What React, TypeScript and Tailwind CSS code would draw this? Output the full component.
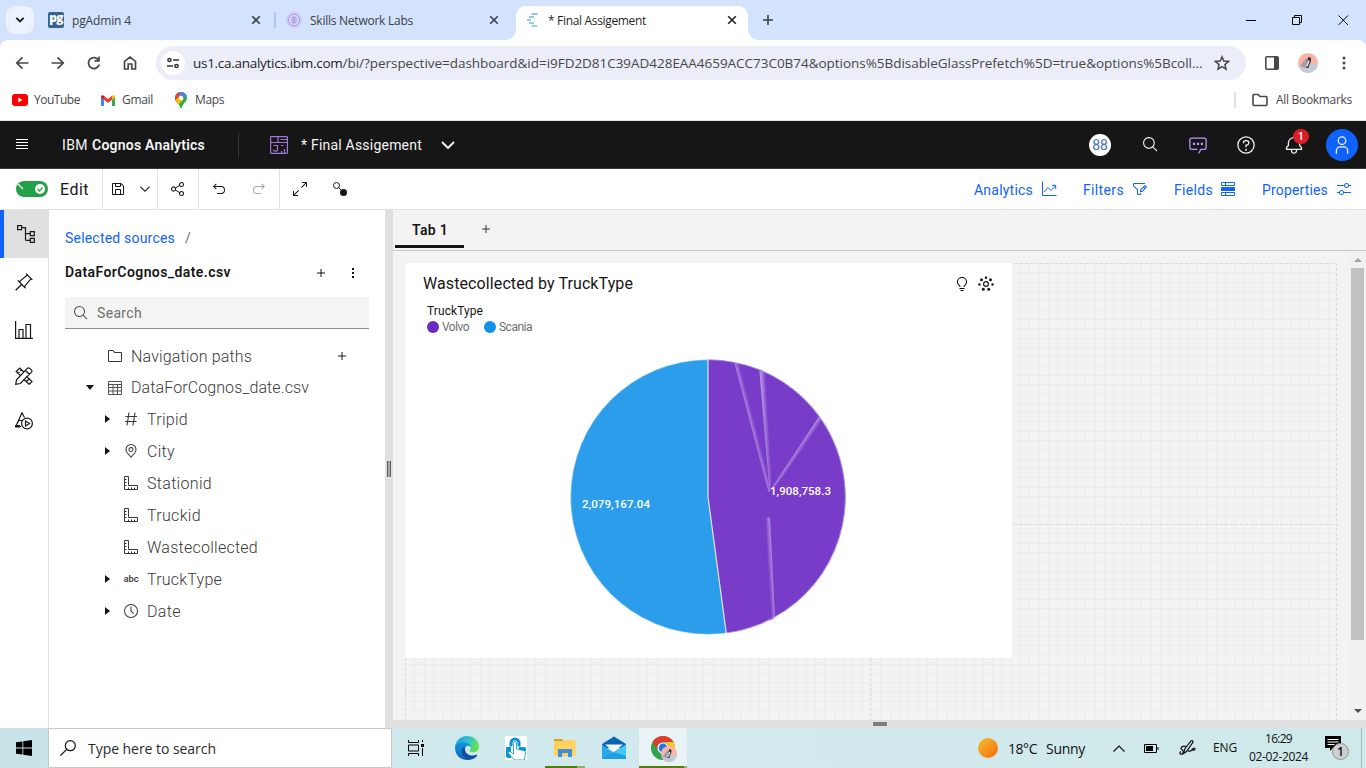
import { useLayoutEffect, useRef, useState, type ReactNode } from 'react';

/* Single-line label whose tracking adapts so the text fills the given width. */
function Label({ text, className = '' }: { text: string; className?: string }) {
  const outer = useRef<HTMLSpanElement>(null);
  const inner = useRef<HTMLSpanElement>(null);
  const [tracking, setTracking] = useState(0);
  useLayoutEffect(() => {
    if (!outer.current || !inner.current) return;
    const room = outer.current.getBoundingClientRect().width;
    const natural = inner.current.getBoundingClientRect().width;
    setTracking((room - natural) / text.length);
  }, [text]);
  return (
    <span ref={outer} className={`block shrink-0 whitespace-pre ${className}`}>
      <span ref={inner} style={{ letterSpacing: tracking }}>{text}</span>
    </span>
  );
}

function Icon({ d, className = '', children }: { d?: string; className?: string; children?: ReactNode }) {
  return (
    <svg viewBox="0 0 32 32" width="16" height="16" fill="currentColor" className={`shrink-0 ${className}`}>
      {d && <path d={d} />}
      {children}
    </svg>
  );
}

const P = {
  add: 'M17 15V8h-2v7H8v2h7v7h2v-7h7v-2z',
  chevron: 'M16 22 6 12l1.4-1.4 8.6 8.6 8.6-8.6L26 12z',
  share:
    'M23,20a5,5,0,0,0-3.89,1.89L11.8,17.32a4.46,4.46,0,0,0,0-2.64l7.31-4.57A5,5,0,1,0,18,7a4.79,4.79,0,0,0,.2,1.32l-7.31,4.57a5,5,0,1,0,0,6.22l7.31,4.57A4.79,4.79,0,0,0,18,25a5,5,0,1,0,5-5ZM23,4a3,3,0,1,1-3,3A3,3,0,0,1,23,4ZM7,19a3,3,0,1,1,3-3A3,3,0,0,1,7,19Zm16,9a3,3,0,1,1,3-3A3,3,0,0,1,23,28Z',
  save: 'M27.71,9.29l-5-5A1,1,0,0,0,22,4H6A2,2,0,0,0,4,6V26a2,2,0,0,0,2,2H26a2,2,0,0,0,2-2V10A1,1,0,0,0,27.71,9.29ZM12,6h8v4H12Zm8,20H12V18h8Zm2,0V18a2,2,0,0,0-2-2H12a2,2,0,0,0-2,2v8H6V6h4v4a2,2,0,0,0,2,2h8a2,2,0,0,0,2-2V6.41l4,4V26Z',
  undo: 'M20,10H7.8149l3.5874-3.5859L10,5,4,11,10,17l1.4023-1.4146L7.8179,12H20a6,6,0,0,1,0,12H12v2h8a8,8,0,0,0,0-16Z',
  expand:
    'M20 2v2h6.586L18 12.582 19.414 14 28 5.414V12h2V2zM14 19.416 12.592 18 4 26.586V20H2v10h10v-2H5.414z',
  search:
    'M29,27.5859l-7.5521-7.5521a11.0177,11.0177,0,1,0-1.4141,1.4141L27.5859,29ZM4,13a9,9,0,1,1,9,9A9.01,9.01,0,0,1,4,13Z',
  help: 'M16,2A14,14,0,1,0,30,16,14,14,0,0,0,16,2Zm0,26A12,12,0,1,1,28,16,12,12,0,0,1,16,28ZM17,8H15.5A4.49,4.49,0,0,0,11,12.5V13h2v-.5A2.5,2.5,0,0,1,15.5,10H17a2.5,2.5,0,0,1,0,5H15v4.5h2V17a4.5,4.5,0,0,0,0-9Z',
  bell: 'M28.7071,19.293,26,16.5859V13a10.0136,10.0136,0,0,0-9-9.9492V1H15V3.0508A10.0136,10.0136,0,0,0,6,13v3.5859L3.2929,19.293A1,1,0,0,0,3,20v3a1,1,0,0,0,1,1h7v.7768a5.152,5.152,0,0,0,4.5,5.1987A5.0057,5.0057,0,0,0,21,25V24h7a1,1,0,0,0,1-1V20A1,1,0,0,0,28.7071,19.293ZM19,25a3,3,0,0,1-6,0V24h6Zm8-3H5V20.4141L7.707,17.707A1,1,0,0,0,8,17V13a8,8,0,0,1,16,0v4a1,1,0,0,0,.293.707L27,20.4141Z',
  user: 'M16 4a5 5 0 1 1-5 5 5 5 0 0 1 5-5m0-2a7 7 0 1 0 7 7A7 7 0 0 0 16 2zM26 30H24V25a5 5 0 0 0-5-5H13a5 5 0 0 0-5 5v5H6V25a7 7 0 0 1 7-7h6a7 7 0 0 1 7 7z',
  chat: 'M17.74,30,16,29l4-7h6a2,2,0,0,0,2-2V8a2,2,0,0,0-2-2H6A2,2,0,0,0,4,8V20a2,2,0,0,0,2,2h9v2H6a4,4,0,0,1-4-4V8A4,4,0,0,1,6,4H26a4,4,0,0,1,4,4V20a4,4,0,0,1-4,4H21.16ZM8 12.500h3.500v3.500H8zM14.300 12.500h3.500v3.500h-3.500zM20.500 12.500H24v3.500h-3.500z',
  filter:
    'M26,6H4V9.1708l7.4142,7.4143L12,17.171V26h4V24h2v2a2,2,0,0,1-2,2H12a2,2,0,0,1-2-2V18L2.5858,10.5853A2,2,0,0,1,2,9.1711V6A2,2,0,0,1,4,4H26ZM29.71,11.29l-3-3a1,1,0,0,0-1.42,0L16,17.59V22h4.41l9.3-9.29A1,1,0,0,0,29.71,11.29ZM19.59,20H18V18.41l5-5L24.59,15ZM26,13.59,24.41,12,26,10.41,27.59,12Z',
  adjust:
    'M30 8h-4.1c-.5-2.3-2.5-4-4.9-4s-4.4 1.7-4.9 4H2v2h14.1c.5 2.3 2.5 4 4.9 4s4.4-1.7 4.9-4H30V8zM21 12c-1.7 0-3-1.3-3-3s1.3-3 3-3 3 1.3 3 3S22.7 12 21 12zM2 24h4.100c.5 2.300 2.500 4 4.900 4s4.400-1.700 4.900-4H30v-2H15.900c-.5-2.300-2.500-4-4.900-4s-4.400 1.700-4.900 4H2V24zM11 20c1.700 0 3 1.300 3 3s-1.300 3-3 3-3-1.300-3-3S9.300 20 11 20z',
  pin: 'M28.59,13.31,30,11.9,20,2,18.69,3.42,19.87,4.6,8.38,14.32,6.66,12.61,5.25,14l5.66,5.68L2,28.58,3.41,30l8.91-8.91L18,26.75l1.39-1.42-1.71-1.71L27.4,12.13ZM16.26,22.2,9.8,15.74,21.29,6,26,10.71Z',
  folder:
    'M11.17,6l3.42,3.41.58.59H28V26H4V6h7.17m0-2H4A2,2,0,0,0,2,6V26a2,2,0,0,0,2,2H28a2,2,0,0,0,2-2V10a2,2,0,0,0-2-2H16L12.59,4.59A2,2,0,0,0,11.17,4Z',
  location:
    'M16,18a5,5,0,1,1,5-5A5.0057,5.0057,0,0,1,16,18Zm0-8a3,3,0,1,0,3,3A3.0033,3.0033,0,0,0,16,10ZM16,30,7.5645,20.0513c-.0479-.0571-.3482-.4515-.3482-.4515A10.8888,10.8888,0,0,1,5,13a11,11,0,0,1,22,0,10.8844,10.8844,0,0,1-2.2148,6.5973l-.0015.0025s-.3.3944-.3447.4474ZM8.8125,18.395c.001.0007.2334.3082.2866.3744L16,26.9079l6.91-8.15c.0439-.0552.2783-.3649.2788-.3657A8.901,8.901,0,0,0,25,13,9,9,0,1,0,7,13,8.9054,8.9054,0,0,0,8.8125,18.395Z',
  clock:
    'M16,30A14,14,0,1,1,30,16,14,14,0,0,1,16,30ZM16,4A12,12,0,1,0,28,16,12,12,0,0,0,16,4ZM20.59 22 15 16.41V7h2v8.58l5 5.010z',
  bulb: 'M11 24H21V26H11zM13 28H19V30H13zM16 2A10 10 0 0 0 6 12a9.190 9.190 0 0 0 3.460 7.620c1 .93 1.540 1.460 1.540 2.380h2c0-1.840-1.110-2.870-2.190-3.860A7.200 7.200 0 0 1 8 12a8 8 0 0 1 16 0 7.200 7.200 0 0 1-2.820 6.140c-1.070 1-2.180 2-2.180 3.860h2c0-.92.53-1.450 1.540-2.390A9.180 9.180 0 0 0 26 12 10 10 0 0 0 16 2z',
};

const Close = ({ className = '' }: { className?: string }) => (
  <svg viewBox="0 0 10 10" className={`size-[10px] shrink-0 ${className}`} stroke="currentColor" strokeWidth="1.6" fill="none">
    <path d="M1.200 1.200l7.600 7.600M8.800 1.200L1.200 8.800" />
  </svg>
);

function Avatar({ className = '' }: { className?: string }) {
  return (
    <svg viewBox="0 0 20 20" className={`shrink-0 ${className}`}>
      <clipPath id="face"><circle cx="10" cy="10" r="10" /></clipPath>
      <g clipPath="url(#face)">
        <rect width="20" height="20" fill="#fbb3a6" />
        <path d="M0 15l6-5 14 1v9H0z" fill="#c3cad8" />
        <path d="M2 13l6-8 2 3-3 7z" fill="#a4a0a6" />
        <path d="M10 4.500c2-1 3.500 0 3 3-.4 3-2 4-2.500 7.500L8 15c1-3 2.500-5 1.500-8z" fill="#2d2c30" />
        <path d="M10.500 7l1.200 1-2 5.500-1 0z" fill="#f7f3f0" />
      </g>
    </svg>
  );
}

function TabStrip() {
  return (
    <div className="flex h-10 items-center bg-[#d3e3fd] text-[12px] text-[#3c4043]">
      <div className="ml-1.5 flex size-7 items-center justify-center rounded-[9px] bg-[#ecf2fe] text-[#1f1f1f]">
        <svg viewBox="0 0 10 6" className="h-[6px] w-[10px]" fill="none" stroke="currentColor" strokeWidth="1.9"><path d="M1.300 .8 5 4.500 8.700 .8" /></svg>
      </div>
      <div className="ml-[14px] flex size-4 items-center justify-center rounded-[2px] bg-[#326690]">
        <span className="-mt-[4px] text-[12px] leading-3 font-extrabold tracking-[-0.8px] text-white">pg</span>
      </div>
      <Label text="pgAdmin 4" className="ml-2 w-[59px] pt-[2px]" />
      <Close className="ml-[120px]" />
      <div className="ml-[13px] h-4 w-[2px] bg-[#a8c7fa]" />
      <svg viewBox="0 0 16 16" className="ml-[10px] size-4" fill="none" stroke="#a99bea" strokeWidth="1">
        <circle cx="8" cy="8" r="7.300" fill="#d9d4fa" stroke="#c9bff7" />
        <circle cx="8" cy="8" r="5.800" />
        <path d="M8 5v7M5.500 6.500 8 4.500l2.500 2M4.500 9 8 7l3.500 2M5.500 11 8 9.500l2.500 1.500" stroke="#9a93c9" strokeWidth=".9" />
      </svg>
      <Label text="Skills Network Labs" className="ml-[8px] w-[103px] pt-[2px]" />
      <Close className="ml-[76px]" />
      <div className="flex h-full flex-col justify-end">
        <div className="ml-[7px] size-[10px] bg-[radial-gradient(circle_at_0_0,#d3e3fd_9.500px,#ffffff_10px)]" />
      </div>
      <div className="mt-1.5 flex h-[34px] w-[232px] items-center rounded-t-[10px] bg-white text-[#1f1f1f]">
        <svg viewBox="0 0 12 14" className="-mt-1.5 ml-[11px] h-[14px] w-3" strokeWidth="1.800" fill="none">
          <path d="M4.500 1h6" stroke="#8bb9f3" /><path d="M2 4h5" stroke="#7cc3f5" /><path d="M0 7h4" stroke="#7cc3f5" />
          <path d="M2 10h5" stroke="#80d1e6" /><path d="M4.500 13h6" stroke="#8ed4e6" />
        </svg>
        <Label text="* Final Assigement" className="-mt-1.5 ml-[9px] w-[98px] pt-[2px]" />
        <Close className="-mt-1.5 ml-[81px]" />
      </div>
      <div className="flex h-full flex-col justify-end">
        <div className="size-[10px] bg-[radial-gradient(circle_at_100%_0,#d3e3fd_9.500px,#ffffff_10px)]" />
      </div>
      <svg viewBox="0 0 10 10" className="ml-[5px] size-[10px]" stroke="#3c4043" strokeWidth="1.600"><path d="M5 0v10M0 5h10" /></svg>
      <svg viewBox="0 0 110 12" className="ml-[473px] h-3 w-[110px]" fill="none" stroke="#000">
        <path d="M0 6.500h10M46.500 3.500h7v7h-7zM48.500 3.500v-2h7v7h-2M92.500 1.500l9.500 9.500M102 1.500l-9.500 9.500" />
      </svg>
    </div>
  );
}

function AddressBar() {
  return (
    <div className="bg-[#d3e3fd]">
      <div className="flex h-[46px] items-center rounded-t-[8px] bg-white text-[#45474a]">
        <svg viewBox="0 0 124 16" className="ml-[15px] h-4 w-[124px]" fill="none" stroke="currentColor" strokeWidth="1.700">
          <path d="M13.500 8H2M7.500 2.300 1.800 8l5.700 5.700M36.500 8H48M42.500 2.300 48.200 8l-5.700 5.700" />
          <path d="M83.700 5.200A5.500 5.500 0 1 0 84.300 9.500M84 1.500v4.300h-4.500" />
          <path d="M109.500 6.300 115 2l5.500 4.300V14h-3.700V9h-3.600v5h-3.700z" />
        </svg>
        <div className="ml-[17px] flex h-[34px] w-[1090px] items-center rounded-full bg-[#ebeef8]">
          <div className="ml-[5px] flex size-6 items-center justify-center rounded-full bg-white text-[#303133]">
            <svg viewBox="0 0 12 12" className="size-3" fill="none" stroke="currentColor" strokeWidth="1.500">
              <circle cx="2.500" cy="3" r="1.600" /><path d="M6 3h6M0 9h6" /><circle cx="9.500" cy="9" r="1.600" />
            </svg>
          </div>
          <Label text="us1.ca.analytics.ibm.com" className="ml-[8px] w-[149.500px] text-[13.500px] text-[#1f1f1f]" />
          <Label
            text="/bi/?perspective=dashboard&id=i9FD2D81C39AD428EAA4659ACC73C0B74&options%5BdisableGlassPrefetch%5D=true&options%5Bcoll..."
            className="w-[860px] text-[13.500px] text-[#474747]"
          />
          <svg viewBox="0 0 16 16" className="ml-[11px] size-4" fill="none" stroke="currentColor" strokeWidth="1.500">
            <path d="M8 1.800l1.800 4.300 4.700.4-3.600 3.100 1.100 4.600L8 11.700l-4 2.500 1.100-4.600L1.500 6.500l4.700-.4z" />
          </svg>
        </div>
        <svg viewBox="0 0 14 14" className="ml-[19px] size-[14px]"><rect x=".8" y=".8" width="12.400" height="12.400" rx="1" fill="none" stroke="currentColor" strokeWidth="1.600" /><path d="M9 1h4v12H9z" fill="currentColor" /></svg>
        <Avatar className="ml-[19px] size-5" />
        <svg viewBox="0 0 4 14" className="ml-[24px] h-[14px] w-1" fill="currentColor"><circle cx="2" cy="2" r="1.500" /><circle cx="2" cy="7" r="1.500" /><circle cx="2" cy="12" r="1.500" /></svg>
      </div>
    </div>
  );
}

function Bookmarks() {
  return (
    <div className="flex h-[35px] items-center border-b border-[#dfe3ea] bg-white pb-[6px] text-[12px] text-[#45474a]">
      <svg viewBox="0 0 16 12" className="ml-3 h-3 w-4"><rect width="16" height="12" rx="3" fill="#f00" /><path d="M6.300 3.500v5L10.500 6z" fill="#fff" /></svg>
      <Label text="YouTube" className="ml-[6px] w-[46px]" />
      <svg viewBox="0 0 14 11" className="ml-[21px] h-[11px] w-[14px]">
        <path d="M0 1.500V11h3V4.500z" fill="#4285f4" /><path d="M14 1.500V11h-3V4.500z" fill="#34a853" />
        <path d="M3 .8 7 4l4-3.200v4L7 8 3 4.800z" fill="#ea4335" /><path d="M0 1.500C0 0 1.800-.3 3 .8v4L0 2.500z" fill="#c5221f" /><path d="M14 1.500C14 0 12.200-.3 11 .8v4l3-2.300z" fill="#fbbc04" />
      </svg>
      <Label text="Gmail" className="ml-[7px] w-[31px]" />
      <svg viewBox="0 0 12 16" className="ml-[22px] h-4 w-3">
        <clipPath id="mappin"><path d="M6 0a6 6 0 0 1 6 6c0 4-4 5-5 9.300-.3 1-1.700 1-2 0C4 11 0 10 0 6a6 6 0 0 1 6-6z" /></clipPath>
        <g clipPath="url(#mappin)"><rect width="12" height="16" fill="#34a853" /><path d="M0 0h12v4L6 6 0 4z" fill="#4285f4" /><path d="M0 0h4l2 2-6 7z" fill="#ea4335" /><path d="M5 6 0 12V6l3-3z" fill="#ea4335" /><path d="M0 8.500 6 3l3 4-6 6-3-3z" fill="#fbbc04" /><path d="M3 0h9v5L7 4z" fill="#4285f4" /></g>
        <circle cx="6" cy="6" r="2.200" fill="#fff" />
      </svg>
      <Label text="Maps" className="ml-[8px] w-[29px]" />
      <div className="ml-[1010px] h-4 w-[2px] bg-[#d3e3fd]" />
      <svg viewBox="0 0 16 14" className="ml-[16px] h-[14px] w-4" fill="none" stroke="currentColor" strokeWidth="1.600"><path d="M1 2.500q0-1 1-1h4L8 3.500h6q1 0 1 1V11.500q0 1-1 1H2q-1 0-1-1z" /></svg>
      <Label text="All Bookmarks" className="ml-[8px] w-[76px]" />
    </div>
  );
}

function AppHeader() {
  return (
    <header className="flex h-12 items-center border-b border-[#393939] bg-[#161616] text-[14px] text-[#f4f4f4]">
      <svg viewBox="0 0 12 11" className="ml-4 h-[11px] w-3" fill="#fff"><path d="M0 0h12v1H0zM0 3h12v1H0zM0 6h12v1H0zM0 9h12v1H0z" /></svg>
      <Label text="IBM" className="ml-[34px] w-[26px] pt-[2px]" />
      <Label text="Cognos Analytics" className="ml-1 w-[113px] pt-[2px] font-semibold" />
      <div className="ml-[33px] h-6 w-px bg-[#393939]" />
      <svg viewBox="0 0 18 18" className="ml-[31px] size-[18px]" fill="none" stroke="#9d78d8" strokeWidth="1.200">
        <rect x=".6" y=".6" width="16.800" height="16.800" rx=".8" /><path d="M.6 6.500h16.800M8 .6v5.900M10.500 3.500h7M14.500 17v-4M11.500 17v-2M3.500 9.500h4v3.500a2 2 0 0 1-4 .5M11 9.500h2.500" />
      </svg>
      <Label text="* Final Assigement" className="ml-[13px] w-[121px] pt-[2px]" />
      <svg viewBox="0 0 14 8" className="ml-[19px] h-2 w-[14px]" fill="none" stroke="#fff" strokeWidth="1.800"><path d="M1 1l6 6 6-6" /></svg>
      <div className="ml-[634px] flex size-[22px] items-center justify-center rounded-full bg-white pt-[2px] text-[14px] text-[#3d70b2]">88</div>
      <Icon d={P.search} className="ml-[31px] size-[17px]" />
      <Icon d={P.chat} className="ml-[29px] size-5 text-[#be95ff]" />
      <Icon d={P.help} className="ml-7 size-5"><circle cx="16" cy="23.500" r="1.500" /></Icon>
      <div className="relative ml-7 size-5">
        <Icon d={P.bell} className="size-5" />
        <div className="absolute -top-[6px] left-[9px] flex h-[15px] w-4 items-center justify-center rounded-full bg-[#da1e28] text-[11px] leading-none font-medium text-white">1</div>
      </div>
      <div className="ml-[22px] flex size-8 items-center justify-center rounded-full bg-[#0f62fe]"><Icon d={P.user} className="size-5" /></div>
    </header>
  );
}

function Toolbar() {
  return (
    <div className="flex h-[41px] items-center border-b border-[#e0e0e0] bg-white text-[14px] text-[#161616]">
      <div className="ml-4 flex h-4 w-8 items-center justify-end rounded-full bg-[#24a148] pr-[2px]">
        <svg viewBox="0 0 30 12" className="h-3 w-[30px]" fill="none"><path d="M2 1l5 5" stroke="#fff" strokeWidth="1.200" /><circle cx="24" cy="6" r="5" fill="#fff" /><path d="M21.500 6l2 2 3-3.500" stroke="#24a148" strokeWidth="1.300" /></svg>
      </div>
      <Label text="Edit" className="ml-[12px] w-[29px] pt-[2px] text-[16px]" />
      <div className="ml-[13px] flex h-full w-[56px] items-center border-x border-[#e0e0e0]">
        <Icon d={P.save} className="ml-[7px]" /><Icon d={P.chevron} className="ml-[11px]" />
      </div>
      <div className="flex h-full w-[41px] items-center border-r border-[#e0e0e0] pl-[12px]"><Icon d={P.share} /></div>
      <div className="flex h-full w-[81px] items-center border-r border-[#e0e0e0] pl-[12px]">
        <Icon d={P.undo} /><Icon d={P.undo} className="ml-[24px] -scale-x-100 text-[#a8a8a8]" />
      </div>
      <Icon d={P.expand} className="ml-3" />
      <svg viewBox="0 0 14 14" className="ml-[25px] size-[14px]" fill="none" stroke="currentColor"><circle cx="3.500" cy="3.500" r="3" /><path d="M5.600 5.600 8 8" /><circle cx="10.500" cy="10.500" r="3.500" fill="currentColor" stroke="none" /></svg>
      <div className="ml-[627px] flex items-center text-[#0f62fe]">
        <Label text="Analytics" className="w-[59px] pt-[2px]" />
        <svg viewBox="0 0 16 16" className="ml-[8px] size-4" fill="none" stroke="currentColor"><path d="M1.500 0.500v14h14M3 11l4-4.500 3 3L14.500 4.500M11 4.300h3.700V8" /></svg>
        <Label text="Filters" className="ml-[26px] w-[41px] pt-[2px]" />
        <Icon d={P.filter} className="ml-[8px]" />
        <Label text="Fields" className="ml-[26px] w-[39px] pt-[2px]" />
        <svg viewBox="0 0 14 14" className="ml-[8px] size-[14px]" fill="none" stroke="currentColor"><path d="M.5.5h13v3H.5zM.5 10.500h13v3H.5zM4.500.5v3M4.500 10.500v3" /><path d="M0 5h14v4H0z" fill="currentColor" stroke="none" /></svg>
        <Label text="Properties" className="ml-[27px] w-[66px] pt-[2px]" />
        <Icon d={P.adjust} className="ml-[8px]" />
      </div>
    </div>
  );
}

function Rail() {
  return (
    <nav className="flex w-[49px] flex-col border-r border-[#e0e0e0] bg-white text-[#161616]">
      <div className="flex h-12 w-[48px] items-center border-l-4 border-[#0f62fe] bg-[#e0e0e0]">
        <svg viewBox="0 0 18 18" className="ml-[13px] size-[18px]" fill="none" stroke="currentColor" strokeWidth="1.200">
          <path d="M.6.6h4v4h-4zM13.300 6.600h4v4h-4zM13.300 13.300h4v4h-4zM4.600 2.600H8.500V14.500q0 .8.800.8h4M8.500 8.600h4.800" />
        </svg>
      </div>
      <Icon d={P.pin} className="mt-[14px] ml-[14px] size-5" />
      <svg viewBox="0 0 18 18" className="mt-[29px] ml-[15px] size-[18px]" fill="none" stroke="currentColor" strokeWidth="1.200"><path d="M.6 0v17.400H18M4 17V8.500h4V17M11 17V3.500h4.500V17" /></svg>
      <svg viewBox="0 0 18 18" className="mt-[28px] ml-[15px] size-[18px]" fill="none" stroke="currentColor" strokeWidth="1.200">
        <path d="M.7 17.300l.8-4.500L12.500 1.200q1-.8 2 0l2 2q.9 1 0 2L5.300 16.500zM10.500 3.500l4 4" />
        <path d="M5.500 8.500 1.200 4.500 4.800 1l4 4M3 6.500 4.500 5M11.500 9.500l5.500 5-2.800 2.800-5.500-5M11.500 14.500l1.500-1.500M6.500 2.800 5.300 4M14 12l-1.300 1.300" />
      </svg>
      <svg viewBox="0 0 18 18" className="mt-[27px] ml-[15px] size-[18px]" fill="none" stroke="currentColor" strokeWidth="1.200">
        <path d="M9.500 5.500 7 .8 1.500 13M4 8.500h3M0 14.500h6" /><path d="M0 13h5v2.500H0z" fill="currentColor" stroke="none" /><circle cx="12" cy="11.500" r="5.400" /><path d="M10.500 9v5l4-2.500z" />
      </svg>
    </nav>
  );
}

const Ruler = () => (
  <svg viewBox="0 0 14 14" className="size-[14px]" fill="none" stroke="currentColor"><path d="M.5.500h4v9h9v4H.5zM1 3.500h1.500M1 6.500h1.500M1 9.500h1.500M4.500 13v-1.500M7.500 13v-1.500M10.500 13v-1.500" /></svg>
);
const Hash = () => (
  <svg viewBox="0 0 14 14" className="size-[14px]" fill="none" stroke="currentColor" strokeWidth="1.100"><path d="M5 .5 3 13.500M11 .5 9 13.500M1.500 4.500H13M1 9.500h11.500" /></svg>
);

const fields = [
  { name: 'Tripid', width: 'w-[41px]', icon: <Hash />, expandable: true },
  { name: 'City', width: 'w-[28px]', icon: <Icon d={P.location} />, expandable: true },
  { name: 'Stationid', width: 'w-[65px]', icon: <Ruler />, expandable: false },
  { name: 'Truckid', width: 'w-[54px]', icon: <Ruler />, expandable: false },
  { name: 'Wastecollected', width: 'w-[111px]', icon: <Ruler />, expandable: false },
  { name: 'TruckType', width: 'w-[75px]', icon: <Label text="abc" className="w-[15px] text-[9.500px] leading-3 font-medium" />, expandable: true },
  { name: 'Date', width: 'w-[34px]', icon: <Icon d={P.clock} />, expandable: true },
];

function SourcePanel() {
  return (
    <aside className="flex w-[336px] flex-col bg-white text-[#161616]">
      <div className="mt-[18px] flex h-5 items-center pl-4 text-[14px]">
        <Label text="Selected sources" className="w-[110px] pt-px text-[#0f62fe]" />
        <span className="ml-[10px] text-[#6f6f6f]">/</span>
      </div>
      <div className="mt-[14px] flex h-5 items-center pl-4 text-[14px]">
        <Label text="DataForCognos_date.csv" className="w-[166px] pt-px font-semibold" />
        <Icon d={P.add} className="mt-px ml-[82px]" />
        <svg viewBox="0 0 2 10" className="mt-px ml-[23px] h-[10px] w-[2px]" fill="#161616"><path d="M0 0h2v2H0zM0 4h2v2H0zM0 8h2v2H0z" /></svg>
      </div>
      <div className="mt-[15px] ml-4 flex h-8 w-[304px] items-center border-b border-[#8d8d8d] bg-[#f4f4f4] text-[14px] text-[#6f6f6f]">
        <Icon d={P.search} className="ml-2 text-[#525252]" />
        <Label text="Search" className="ml-2 w-[45px] pt-[2px]" />
      </div>
      <div className="mt-[11px] flex h-8 items-center pl-[58px] text-[16px] text-[#525252]">
        <Icon d={P.folder} className="text-[#393939]" />
        <Label text="Navigation paths" className="ml-2 w-[121px] pt-[2px] font-light text-[#393939]" />
        <Icon d={P.add} className="-mt-px ml-[82px] text-[#161616]" />
      </div>
      <div className="flex h-[31px] items-center pl-[37px] text-[16px] text-[#525252]">
        <svg viewBox="0 0 8 5" className="h-[5px] w-2" fill="#161616"><path d="M0 0h8L4 5z" /></svg>
        <svg viewBox="0 0 14 14" className="ml-[14px] size-[14px]" fill="none" stroke="#525252"><path d="M.5.5h13v13H.5zM.5 3.500h13M.5 6.500h13M.5 10h13M5 3.500v10M9.500 3.500v10" /></svg>
        <Label text="DataForCognos_date.csv" className="ml-[9px] w-[178px] pt-px font-light text-[#393939]" />
      </div>
      {fields.map((f) => (
        <div key={f.name} className="flex h-8 items-center text-[16px] text-[#525252]">
          <div className="ml-[56px] w-[17px]">
            {f.expandable && <svg viewBox="0 0 5 8" className="h-2 w-[5px]" fill="#161616"><path d="M0 0v8l5-4z" /></svg>}
          </div>
          <div className="flex w-[18px] justify-center text-[#393939]">{f.icon}</div>
          <Label text={f.name} className={`ml-[7px] pt-[2px] font-light text-[#393939] ${f.width}`} />
        </div>
      ))}
    </aside>
  );
}

function Pie() {
  return (
    <svg viewBox="0 0 276 276" className="mt-[24px] ml-[165px] h-[276px] w-[276px]">
      <defs>
        <linearGradient id="s1" gradientUnits="userSpaceOnUse" x1="181" y1="70" x2="186" y2="68.700"><stop stopColor="#b591e2" /><stop offset="1" stopColor="#783cc8" /></linearGradient>
        <linearGradient id="s2" gradientUnits="userSpaceOnUse" x1="194" y1="70" x2="199" y2="69.700"><stop stopColor="#b591e2" /><stop offset="1" stopColor="#783cc8" /></linearGradient>
        <linearGradient id="s3" gradientUnits="userSpaceOnUse" x1="225" y1="93" x2="229" y2="95.700"><stop stopColor="#b591e2" /><stop offset="1" stopColor="#783cc8" /></linearGradient>
        <linearGradient id="s4" gradientUnits="userSpaceOnUse" x1="202.500" y1="200" x2="197.500" y2="200.300"><stop stopColor="#b591e2" /><stop offset="1" stopColor="#783cc8" /></linearGradient>
      </defs>
      <circle cx="138" cy="138" r="137.500" fill="#2b9dea" />
      <path d="M138 138V.5a137.500 137.500 0 0 1 18.300 273.800z" fill="#783cc8" />
      <path d="M164.300 3.500l6 1.500L200 118v15h-1.500z" fill="url(#s1)" />
      <path d="M189.300 11.500l5.500 2L201.500 118l-1 14h-1z" fill="url(#s2)" />
      <path d="M249 57.500l3.500 5L207 125.500l-6 6V130z" fill="url(#s3)" />
      <path d="M195.500 158.500h4.500l5 100.500-5 2.500z" fill="url(#s4)" />
      <circle cx="138" cy="138" r="137.300" fill="none" stroke="#fff" strokeOpacity=".55" strokeWidth=".8" />
      <path d="M138 .5V138l18.300 136.500" fill="none" stroke="#e6e3f4" strokeWidth="1.200" />
    </svg>
  );
}

function Grid() {
  const step = 9.32;
  return (
    <svg viewBox="0 0 932 457" className="h-[457px] w-[932px]" shapeRendering="crispEdges" fill="none">
      {Array.from({ length: 100 }, (_, i) => <path key={`v${i}`} d={`M${Math.round(i * step) + 0.5} 0v457`} stroke="#ececec" />)}
      {Array.from({ length: 50 }, (_, i) => <path key={`h${i}`} d={`M0 ${Math.round(i * step) + 0.5}h932`} stroke="#ececec" />)}
      <path d="M.5 0v457M465.500 0v457M931.500 0v457M0 .5h932M0 261.500h932" stroke="#dadada" strokeDasharray="3 2" />
    </svg>
  );
}

function Card() {
  return (
    <section className="absolute top-[12px] left-[12px] h-[395px] w-[607px] bg-white">
      <div className="flex h-[41px] items-center">
        <Label text="Wastecollected by TruckType" className="ml-[18px] w-[210px] text-[16px] text-[#161616]" />
        <Icon d={P.bulb} className="ml-[321px]" />
        <svg viewBox="0 0 16 16" className="ml-[8px] size-4" fill="#161616"><circle cx="8" cy="8" r="2.400" fill="none" stroke="#161616" strokeWidth="1.200" /><circle cx="8" cy="1.800" r="1.200" /><circle cx="3.500" cy="3.800" r="1.500" /><circle cx="12.500" cy="3.800" r="1.500" /><circle cx="1.500" cy="8.500" r="1.200" /><circle cx="14.500" cy="8.500" r="1.200" /><circle cx="5.300" cy="13.300" r="1.500" /><circle cx="10.700" cy="13.300" r="1.500" /></svg>
      </div>
      <Label text="TruckType" className="ml-[22px] w-[56px] text-[12px] leading-[15px] text-[#161616]" />
      <div className="flex h-4 items-center text-[12px] text-[#6f6f6f]">
        <div className="ml-[22px] size-3 rounded-full bg-[#6929c4]" />
        <Label text="Volvo" className="ml-[3px] w-[27px]" />
        <div className="ml-[15px] size-3 rounded-full bg-[#1192e8]" />
        <Label text="Scania" className="ml-[3px] w-[33px]" />
      </div>
      <Pie />
      <Label text="2,079,167.04" className="absolute top-[234px] left-[177px] w-[68px] text-[11.500px] leading-[14px] font-medium text-white" />
      <Label text="1,908,758.3" className="absolute top-[221px] left-[365px] w-[61px] text-[11.500px] leading-[14px] font-medium text-white" />
    </section>
  );
}

function Workspace() {
  return (
    <main className="flex w-[973px] flex-col bg-[#f3f3f3]">
      <div className="flex h-[41px] border-b border-[#c6c6c6]">
        <div className="ml-[2px] flex h-[38px] w-[69px] shrink-0 items-center border-b-3 border-[#161616] pt-[5px] pl-[17px]">
          <Label text="Tab 1" className="w-[36px] text-[14px] font-semibold text-[#161616]" />
        </div>
        <Icon d={P.add} className="mt-[11px] ml-[14px] text-[#393939]" />
      </div>
      <div className="relative flex h-[469px] overflow-hidden">
        <div className="mt-3 ml-3 w-[944px]"><Grid /></div>
        <Card />
        <div className="flex w-[17px] flex-col items-center bg-[#f1f1f1]">
          <svg viewBox="0 0 8 4" className="mt-[7px] h-1 w-2" fill="#a3a3a3"><path d="M0 4h8L4 0z" /></svg>
          <div className="mt-[6px] h-[372px] w-[13px] bg-[#c1c1c1]" />
          <svg viewBox="0 0 8 4" className="mt-[69px] h-1 w-2" fill="#505050"><path d="M0 0h8L4 4z" /></svg>
        </div>
      </div>
      <div className="h-2 bg-[#e0e0e0] pt-[2px] pl-[480px]"><div className="h-1 w-[14px] bg-[#7d7d7d]" /></div>
    </main>
  );
}

function Taskbar() {
  return (
    <footer className="flex h-10 bg-linear-to-r from-[#c9e4e8] via-[#d2eaed] to-[#cfe8ea] font-['Open_Sans','Noto_Sans',sans-serif] text-[12px] text-[#111]">
      <div className="flex w-12 items-center justify-center">
        <svg viewBox="0 0 16 16" className="size-4" fill="#000"><path d="M0 2.300l6.500-.9v6.100H0zM7.300 1.300 16 0v7.500H7.300zM0 8.400h6.500v6.100L0 13.700zM7.300 8.400H16V16l-8.700-1.200z" /></svg>
      </div>
      <div className="flex w-[344px] items-center border border-[#c8c8c8] bg-white">
        <svg viewBox="0 0 16 16" className="ml-[11px] size-4" fill="none" stroke="#111" strokeWidth="1.200"><circle cx="10.300" cy="5.700" r="5" /><path d="M6.700 9.300.5 15.500" /></svg>
        <Label text="Type here to search" className="ml-3 w-[128px] text-[14px] text-[#2a2a2a]" />
      </div>
      <svg viewBox="0 0 16 16" className="mt-3 ml-4 size-4" fill="none" stroke="#000"><path d="M.5 0v2.500h10V0M.5 16v-2.500h10V16M.5 5h10v6H.5zM14.500 0v2M14.500 8v8" /><path d="M13 4h3v3h-3z" fill="#000" stroke="none" /></svg>
      <svg viewBox="0 0 24 24" className="mt-2 ml-[31px] size-6">
        <defs>
          <linearGradient id="e1" x1="0" y1="0" x2="1" y2=".3"><stop stopColor="#1793dc" /><stop offset=".5" stopColor="#2dbddc" /><stop offset="1" stopColor="#60e25a" /></linearGradient>
          <linearGradient id="e2" x1="0" y1="0" x2="0" y2="1"><stop stopColor="#1597de" /><stop offset="1" stopColor="#0c63bd" /></linearGradient>
        </defs>
        <path d="M0 12C0 5 5.500 0 12 0c7 0 12 5 12 10.500 0 4-3 5.800-6 5.800-2.500 0-4-1-3-2.300 1.500-2 .5-6-5-6C5 8 1 10 0 12z" fill="url(#e1)" />
        <path d="M0 12c.5-3.500 4-6 8.500-6C13 6 16 9 15.500 12c-.2-1.500-1.500-2.500-3.500-2-3 1-3 6 1 9 2.500 2 6 2 9.500.5C20 22.500 16 24 12 24 5.500 24 0 19 0 12z" fill="url(#e2)" />
        <path d="M9 10.500c-4 4-2 10.500 4 13.300 4-.3 7.500-2.300 9-4.300.3-.7 0-1-.5-.7C17 21 9.500 18.500 10 13z" fill="#104e9e" />
      </svg>
      <svg viewBox="0 0 22 24" className="mt-2 ml-[26px] h-6 w-[22px]">
        <rect width="22" height="24" fill="#fff" />
        <path d="M1 11h5v11H3q-2 0-2-2zM14 11h5q2 0 2 2v2h-7z" fill="#0795cf" />
        <path d="M4.500 10.500V7a5.500 5.500 0 0 1 11 0v3.500h-3V7a2.500 2.500 0 0 0-5 0v3.500z" fill="#0a93d0" />
        <path d="M8.500 7a1.500 1.500 0 0 1 3 0v6l7 1.500q2 .5 2 2.500l-1 7H9.500L3 17q0-2 2-1.500l3.500 2.500z" fill="#fff" stroke="#0795cf" strokeWidth=".8" />
      </svg>
      <div className="ml-[18px] flex w-10 flex-col">
        <svg viewBox="0 0 22 20" className="mt-[10px] ml-[9px] h-5 w-[22px]"><path d="M0 1h8l2 2.500H0z" fill="#e2a114" /><path d="M0 3.500h10l1-1.500h10q.5 0 .5.500V18H0z" fill="#fed25d" /><path d="M4 11h14v8h-4v-4H8v4H4z" fill="#3f8fd8" /></svg>
        <div className="mt-auto flex h-[2px]"><div className="w-8 bg-[#4f8107]" /><div className="w-2 bg-[#8eb060]" /></div>
      </div>
      <svg viewBox="0 0 24 24" className="mt-[8px] ml-[17px] size-6"><path d="M0 8 12 .5 24 8v4H0z" fill="#0b64b5" /><path d="M3 8.500h18L12 16z" fill="#f5f7f8" /><path d="M0 8.500 12 17 24 8.500V23H0z" fill="#2ba8e8" /><path d="M24 8.500 0 23h24z" fill="#1596e1" opacity=".6" /><path d="M12 16 24 8.500V20z" fill="#41c8f5" /></svg>
      <div className="ml-[13px] flex w-12 flex-col bg-[#e9f3f5]">
        <div className="relative mt-2 ml-3 size-[27px]">
          <svg viewBox="0 0 24 24" className="size-6">
            <circle cx="12" cy="12" r="12" fill="#2fa24b" />
            <path d="M1.600 6A12 12 0 0 1 22.400 6H12a6 6 0 0 0-5.200 9z" fill="#e13b2d" /><path d="M22.400 6A12 12 0 0 1 12 24l5.200-9A6 6 0 0 0 12 6z" fill="#fcc721" />
            <circle cx="12" cy="12" r="5.600" fill="#fff" /><circle cx="12" cy="12" r="4.400" fill="#2b71e8" />
          </svg>
          <Avatar className="absolute top-[10px] left-[10px] size-4" />
        </div>
        <div className="mt-auto flex h-[2px]"><div className="w-[45px] bg-[#4f8107]" /><div className="w-[3px] bg-[#8eb060]" /></div>
      </div>
      <div className="ml-[291px] flex items-center">
        <div className="size-5 rounded-full bg-linear-to-br from-[#efbf2c] to-[#f6650c]" />
        <Label text="18°C" className="ml-[10px] w-[29px] text-[14px]" />
        <Label text="Sunny" className="ml-[9px] w-[39px] text-[14px]" />
        <svg viewBox="0 0 12 7" className="ml-[28px] h-[7px] w-3" fill="none" stroke="#111" strokeWidth="1.200"><path d="M.5 6.500 6 1l5.500 5.500" /></svg>
        <svg viewBox="0 0 15 9" className="ml-[19px] h-[9px] w-[15px]" fill="none" stroke="#000"><path d="M.5.5h12v8H.5zM14 3v3" /><path d="M2 2h7v5H2z" fill="#000" stroke="none" /></svg>
        <svg viewBox="0 0 17 16" className="ml-[20px] h-4 w-[17px]" fill="none" stroke="#111" strokeWidth="1.200"><path d="M4.500 13.500 6 8.500 12 1q1.500-1 2 .5 0 1-.5 1.500L7.500 11.500z" /><path d="M7 6.500C4 5.500 1 7.500 2.500 9S5.500 11.500 3.500 13.500s-3.500-.5-1.500-2M9 10.500c2 2 3 0 4-1s3-2 3-.5-2 1.500-3 .5" /></svg>
        <Label text="ENG" className="ml-[17px] w-[24px]" />
        <div className="ml-[12px] flex w-[59px] flex-col items-center">
          <Label text="16:29" className="w-[27px] leading-[18px]" />
          <Label text="02-02-2024" className="w-[59px] leading-[18px]" />
        </div>
        <div className="relative ml-[17px] h-6 w-6">
          <svg viewBox="0 0 16 15" className="h-[15px] w-4"><path d="M0 0h16v12H8l-3 3v-3H0z" fill="#000" /><path d="M2.500 3.500h11M2.500 6h11M2.500 8.500h7" stroke="#fff" /></svg>
          <div className="absolute top-[7px] left-[7px] flex size-[17px] items-center justify-center rounded-full border border-[#8d9394] bg-[#ccd0d1] text-[12px] leading-none font-semibold">1</div>
        </div>
        <div className="ml-3 h-10 w-px bg-[#a5bcbe]" />
      </div>
    </footer>
  );
}

export default function App() {
  return (
    <div className="flex h-[768px] w-[1366px] flex-col overflow-hidden bg-white font-['Roboto','Liberation_Sans',sans-serif]">
      <div className="font-['Open_Sans','Noto_Sans',sans-serif]">
        <TabStrip />
        <AddressBar />
        <Bookmarks />
      </div>
      <AppHeader />
      <Toolbar />
      <div className="flex h-[518px]">
        <Rail />
        <SourcePanel />
        <div className="flex w-2 flex-col items-center bg-[#e0e0e0]">
          <div className="mt-[251px] h-4 w-1 border-x border-[#5f5f5f] bg-[#a8a8a8]" />
        </div>
        <Workspace />
      </div>
      <Taskbar />
    </div>
  );
}
